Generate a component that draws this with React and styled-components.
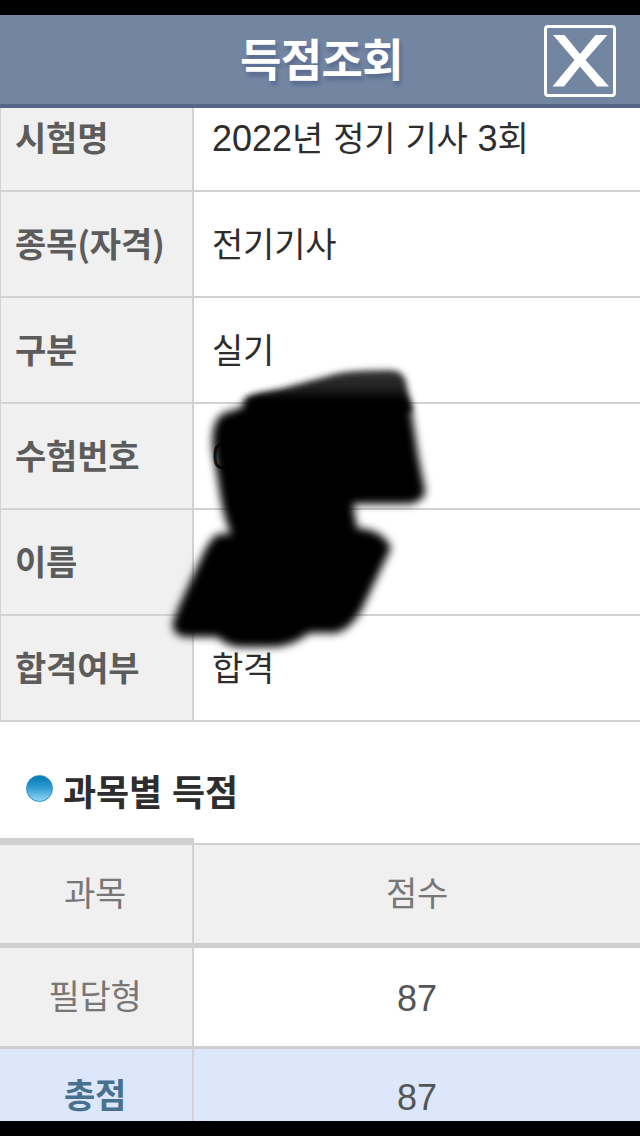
import React from 'react'
import styled, { createGlobalStyle } from 'styled-components'

// styling

const GlobalStyle = createGlobalStyle`
  body {
    margin: 0;
    background: #000;
    overflow: hidden;
  }
`

const Screen = styled.div`
  position: relative;
  box-sizing: border-box;
  width: 640px;
  height: 1136px;
  padding: 15px 0;
  overflow: hidden;
  background: #000;
  color: #2d2d2d;
  font-family: 'Noto Sans CJK KR', sans-serif;
  font-size: 34px;
  line-height: 50px;
  letter-spacing: -0.2px;
  white-space: nowrap;
`

const HeaderBar = styled.header`
  display: grid;
  grid-template-columns: 96px 1fr 96px;
  align-items: center;
  box-sizing: border-box;
  height: 93px;
  background: #7386a1;
  border-bottom: 4px solid #566786;
`

const Title = styled.h1`
  grid-column: 2;
  margin: 0;
  padding: 0 0 4px 3px;
  text-align: center;
  color: #fff;
  font-size: 45px;
  line-height: 60px;
  letter-spacing: -0.6px;
  text-shadow: 2px 4px 4px #56688f;
`

const CloseButton = styled.button`
  width: 72px;
  height: 72px;
  padding: 0;
  margin-top: 3px;
  border: 3px solid #fff;
  border-radius: 4px;
  background: none;

  svg {
    display: block;
  }
`

const Content = styled.main`
  height: 1013px;
  overflow: hidden;
  background: #fff;
`

const InfoTable = styled.dl`
  margin: 0;
`

const InfoRow = styled.div`
  display: grid;
  grid-template-columns: 194px 1fr;
  box-sizing: border-box;
  height: ${props => (props.$first ? 84 : 106)}px;
  border-bottom: 2px solid #d2d2d2;
`

const InfoLabel = styled.dt`
  box-sizing: border-box;
  padding: ${props => (props.$first ? 4 : 26)}px 0 0 14px;
  border-left: 1px solid #d2d2d2;
  border-right: 2px solid #d2d2d2;
  background: #f0f0f0;
  color: #5c5c5c;
  font-weight: bold;
`

const InfoValue = styled.dd`
  margin: 0;
  padding: ${props => (props.$first ? 4 : 26)}px 0 0 18px;
`

const Latin = styled.span`
  font-family: 'Liberation Sans', sans-serif;
  font-size: 36px;
  line-height: 1;
  letter-spacing: 0;
`

const SectionTitle = styled.h2`
  display: flex;
  align-items: center;
  box-sizing: border-box;
  height: 116px;
  margin: 0;
  padding: 20px 0 0 26px;
  font-size: 36px;
  letter-spacing: -0.1px;
`

const Bullet = styled.i`
  width: 27px;
  height: 27px;
  margin: -4px 10px 0 0;
  box-sizing: border-box;
  border: 1px solid #238fc1;
  border-radius: 50%;
  background: linear-gradient(#0579b5, #2d9bd0 45%, #93d5f6);
`

const ScoreTable = styled.section`
  display: grid;
  grid-template-columns: 194px 1fr;
  grid-template-rows: 105px 103px 102px;
`

const ScoreCell = styled.div`
  display: flex;
  justify-content: center;
  box-sizing: border-box;
  margin-top: ${props => props.$inset || 0}px;
  padding-top: ${props => props.$top}px;
  padding-right: ${props => (props.$label ? 2 : 0)}px;
  border-top: ${props => props.$rule}px solid #cfcfcf;
  border-right: ${props => (props.$label ? 2 : 0)}px solid #d2d2d2;
  background: ${props => props.$bg};
  color: ${props => props.$color};
  font-weight: ${props => (props.$bold ? 'bold' : 'normal')};
`

const MarkerLayer = styled.svg`
  position: absolute;
  top: 350px;
  left: 150px;
  pointer-events: none;
`

// data

const info = [
  { label: '시험명', value: '2022년 정기 기사 3회' },
  { label: '종목(자격)', value: '전기기사' },
  { label: '구분', value: '실기' },
  { label: '수험번호', value: '0' },
  { label: '이름', value: 'ㅂ' },
  { label: '합격여부', value: '합격' },
]

// render

// digits and spaces use the latin face, everything else the korean one
function Mixed({ text }) {
  return (
    <span>
      {text
        .split(/([0-9 ]+)/)
        .map((part, i) => (i % 2 ? <Latin key={i}>{part}</Latin> : part))}
    </span>
  )
}

function Header() {
  return (
    <HeaderBar>
      <Title>득점조회</Title>
      <CloseButton aria-label="닫기">
        <svg width="66" height="66" viewBox="0 0 66 66">
          <path
            d="M6 7h11.500L33 26 48.500 7h12L38.500 32 62 58.500H50L33 38.500 17 58.500H5.500L27.500 32Z"
            fill="#fff"
          />
        </svg>
      </CloseButton>
    </HeaderBar>
  )
}

function Info() {
  return (
    <InfoTable>
      {info.map((row, i) => (
        <InfoRow key={row.label} $first={i === 0}>
          <InfoLabel $first={i === 0}>{row.label}</InfoLabel>
          <InfoValue $first={i === 0}>
            <Mixed text={row.value} />
          </InfoValue>
        </InfoRow>
      ))}
    </InfoTable>
  )
}

function Scores() {
  return (
    <ScoreTable>
      <ScoreCell $label $rule={7} $top={22} $bg="#f0f0f0" $color="#777">
        과목
      </ScoreCell>
      <ScoreCell $inset={5} $rule={2} $top={22} $bg="#f0f0f0" $color="#777">
        점수
      </ScoreCell>
      <ScoreCell $label $rule={5} $top={22} $bg="#f0f0f0" $color="#777">
        필답형
      </ScoreCell>
      <ScoreCell $rule={5} $top={24} $bg="#fff" $color="#555">
        <Mixed text="87" />
      </ScoreCell>
      <ScoreCell $label $bold $rule={3} $top={20} $bg="#dde7fb" $color="#48718f">
        총점
      </ScoreCell>
      <ScoreCell $rule={3} $top={22} $bg="#dde7fb" $color="#555">
        <Mixed text="87" />
      </ScoreCell>
    </ScoreTable>
  )
}

// black marker strokes over the personal data
function Marker() {
  return (
    <MarkerLayer width="300" height="320" viewBox="150 350 300 320">
      <defs>
        <filter id="soft" x="-10%" y="-10%" width="120%" height="120%">
          <feGaussianBlur stdDeviation="4" />
        </filter>
        <filter id="softTop" x="-10%" y="-30%" width="120%" height="160%">
          <feGaussianBlur stdDeviation="3" />
        </filter>
        <linearGradient id="fade" x1="0" y1="0" x2="0" y2="1">
          <stop offset="0" stopColor="#383838" />
          <stop offset="0.500" stopColor="#1c1c1c" />
          <stop offset="1" stopColor="#000" />
        </linearGradient>
      </defs>
      <path
        d="M244 400Q248 395 280 389L335 374Q350 370 390 370Q403 370 406 382L412 412H250Z"
        fill="url(#fade)"
        filter="url(#softTop)"
      />
      <path
        d="M246 402Q250 396 270 396H402Q408 398 411 409L418 455L425 490Q426 500 410 504H353L357 528Q384 530 391 548L378 575L361 611Q346 635 330 633H309Q292 647 270 647H242Q228 647 217 637H186Q171 635 173 622L180 604L204 552Q210 539 218 534H231Q225 521 221 500L213 450Q210 424 222 414L240 408Z"
        fill="#000"
        filter="url(#soft)"
      />
    </MarkerLayer>
  )
}

export default function App() {
  return (
    <>
      <GlobalStyle />
      <Screen>
        <Header />
        <Content>
          <Info />
          <SectionTitle>
            <Bullet />
            <Mixed text="과목별 득점" />
          </SectionTitle>
          <Scores />
        </Content>
        <Marker />
      </Screen>
    </>
  )
}
